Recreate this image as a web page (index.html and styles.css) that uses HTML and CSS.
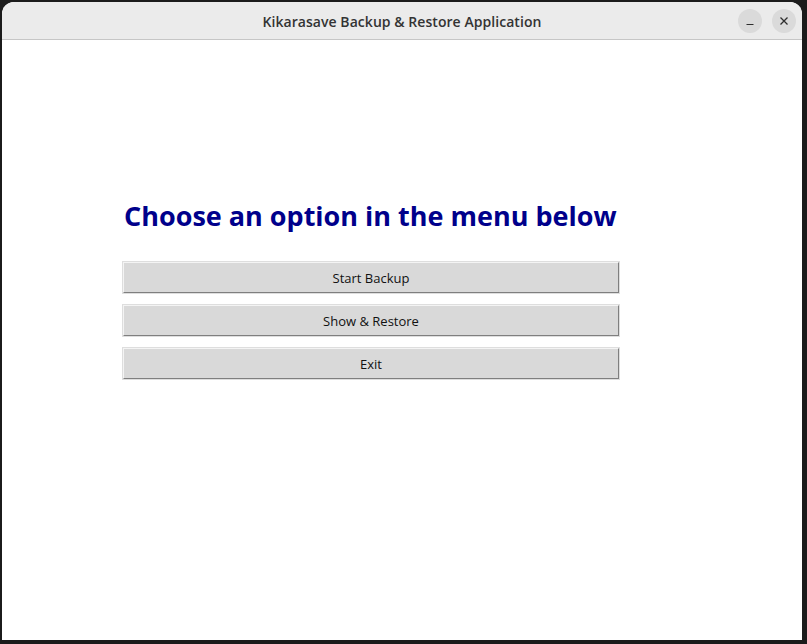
FILE: index.html
```html
<!DOCTYPE html>
<html>
<head>
<meta charset="utf-8">
<link rel="stylesheet" href="styles.css">
</head>
<body>
<div class="desktop">
  <div class="window">
    <div class="titlebar">
      <div class="title">Kikarasave Backup &amp; Restore Application</div>
      <div class="controls">
        <div class="ctl">
          <svg width="10" height="10" viewBox="0 0 10 10"><path d="M1.5 8.5h7" stroke="#2e2e2e" stroke-width="1.2"/></svg>
        </div>
        <div class="ctl">
          <svg width="10" height="10" viewBox="0 0 10 10"><path d="M1.5 1.5l7 7M8.5 1.5l-7 7" stroke="#2e2e2e" stroke-width="1.3"/></svg>
        </div>
      </div>
    </div>
    <div class="content">
      <h1 class="heading">Choose an option in the menu below</h1>
      <div class="menu">
        <div class="btn">Start Backup</div>
        <div class="btn">Show &amp; Restore</div>
        <div class="btn">Exit</div>
      </div>
    </div>
  </div>
</div>
</body>
</html>
```
FILE: styles.css
```css
html, body {
  margin: 0;
  padding: 0;
  background: #1b1b1b;
}
.desktop {
  width: 807px;
  height: 644px;
  box-sizing: border-box;
  padding: 2px 5px 4px 2px;
}
.window {
  width: 800px;
  height: 638px;
  background: #ffffff;
  border-radius: 12px 12px 0 0;
  overflow: hidden;
  display: flex;
  flex-direction: column;
}
.titlebar {
  height: 37px;
  flex: none;
  background: #ebebeb;
  border-bottom: 1px solid #c6c6c6;
  display: flex;
  align-items: center;
  justify-content: center;
  position: relative;
}
.title {
  font-family: "Open Sans", sans-serif;
  font-weight: 600;
  font-size: 14px;
  letter-spacing: 0.05px;
  color: #333333;
  margin-top: 1px;
}
.controls {
  position: absolute;
  right: 6px;
  top: 7px;
  display: flex;
  gap: 10px;
}
.ctl {
  width: 24px;
  height: 24px;
  border-radius: 50%;
  background: #dadada;
  display: flex;
  align-items: center;
  justify-content: center;
}
.content {
  flex: 1;
  padding: 158px 0 0 120px;
  display: flex;
  flex-direction: column;
}
.heading {
  margin: 0;
  font-family: "Open Sans", sans-serif;
  font-weight: 700;
  font-size: 27px;
  line-height: 36px;
  color: #00008b;
  padding-left: 2px;
}
.menu {
  margin-top: 28px;
  margin-left: 1px;
  display: flex;
  flex-direction: column;
  gap: 12px;
  width: 496px;
}
.btn {
  height: 31px;
  box-sizing: border-box;
  background: #d9d9d9;
  border: 1px solid;
  border-color: #f4f4f4 #7f7f7f #7f7f7f #f4f4f4;
  box-shadow: 0 0 0 1px #dedede;
  display: flex;
  align-items: center;
  justify-content: center;
  font-family: "Open Sans", sans-serif;
  font-size: 13px;
  color: #111111;
}
```
